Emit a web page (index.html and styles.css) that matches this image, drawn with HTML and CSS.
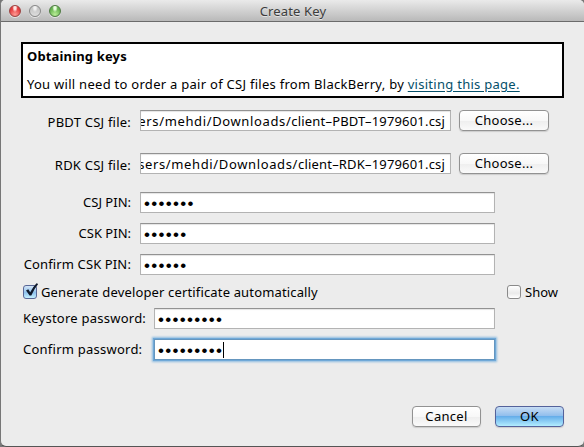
FILE: index.html
```html
<!DOCTYPE html>
<html lang="en">
<head>
<meta charset="utf-8">
<title>Create Key</title>
<link rel="stylesheet" href="styles.css">
</head>
<body>
<div class="window">
  <header class="titlebar">
    <div class="lights"><i class="light red"></i><i class="light gray"></i><i class="light green"></i></div>
    <span class="title">Create Key</span>
  </header>
  <main class="content">
    <section class="notice">
      <div class="heading">Obtaining keys</div>
      <p class="intro">You will need to order a pair of CSJ files from BlackBerry, by <a class="link">visiting this page.</a></p>
    </section>
    <div class="row file-row">
      <label class="label l-pbdt">PBDT CSJ file:</label>
      <div class="field path"><span class="folder">ers/mehdi/Downloads/</span><span class="file">client–PBDT–1979601.csj</span></div>
      <button class="button choose">Choose...</button>
    </div>
    <div class="row file-row second">
      <label class="label l-rdk">RDK CSJ file:</label>
      <div class="field path"><span class="folder">sers/mehdi/Downloads/</span><span class="file">client–RDK–1979601.csj</span></div>
      <button class="button choose">Choose...</button>
    </div>
    <div class="row">
      <label class="label">CSJ PIN:</label>
      <div class="field"><span class="dots">•••••••</span></div>
    </div>
    <div class="row">
      <label class="label">CSK PIN:</label>
      <div class="field"><span class="dots">••••••</span></div>
    </div>
    <div class="row">
      <label class="label l-confirm">Confirm CSK PIN:</label>
      <div class="field"><span class="dots">••••••</span></div>
    </div>
    <div class="checks">
      <span class="check checked"><svg class="tick" viewBox="0 0 16 16"><path d="M3 7.4L5.3 6.2L7.2 9.3Q9.8 4 13.5 .3L15.2 1Q11 6 8.3 12.5H6.6Z"/></svg></span>
      <label class="generate">Generate developer certificate automatically</label>
      <span class="check show-check"></span>
      <label class="show">Show</label>
    </div>
    <div class="row password keystore">
      <label class="label">Keystore password:</label>
      <div class="field"><span class="dots">•••••••••</span></div>
    </div>
    <div class="row password">
      <label class="label">Confirm password:</label>
      <div class="field focused"><span class="dots">•••••••••</span><span class="caret"></span></div>
    </div>
    <footer class="actions">
      <button class="button cancel">Cancel</button>
      <button class="button ok">OK</button>
    </footer>
  </main>
</div>
</body>
</html>
```
FILE: styles.css
```css
* { box-sizing: border-box; }
body {
  margin: 0;
  background: #777;
  font: 13px/20px "Noto Sans", "Open Sans", sans-serif;
  color: #000;
}
.window {
  width: 584px;
  height: 447px;
  border-left: 1px solid #777;
  border-bottom: 1px solid #555;
  border-radius: 5px 5px 6px 6px;
  background: #ececec;
  overflow: hidden;
}
.titlebar {
  display: grid;
  grid-template-columns: 60px 1fr 60px;
  align-items: center;
  height: 22px;
  border-bottom: 1px solid #6b6b6b;
  background: linear-gradient(#eaeaea, #d4d4d4 45%, #b9b9b9);
}
.lights { display: flex; gap: 8px; padding-left: 8px; }
.light {
  width: 12px;
  height: 12px;
  border: 1px solid #888;
  border-radius: 50%;
  box-shadow: 0 1px 0 #e5e5e5;
}
.red { border-color: #9b4442; background: radial-gradient(ellipse at 50% 18%, #ffe2df 0 15%, transparent 38%), radial-gradient(circle at 50% 85%, #ff9b94, #e3383b 65%); }
.gray { background: radial-gradient(ellipse at 50% 15%, #f2f2f2 0 15%, transparent 40%), linear-gradient(#bcbcbc, #dedede); }
.green { border-color: #4f7b43; background: radial-gradient(ellipse at 50% 18%, #eaffdf 0 15%, transparent 38%), radial-gradient(circle at 50% 85%, #b9ee96, #65b14f 65%); }
.title { padding-left: 1px; text-align: center; letter-spacing: .15px; color: #3c3c3c; text-shadow: 0 1px 0 #e3e3e3; }
.content { padding: 20px 20px 0; }
.notice {
  height: 56px;
  padding: 2px 4px 0;
  border: 2px solid #000;
  background: #fff;
}
.heading { font-weight: 700; letter-spacing: .15px; }
.intro { margin: 8px 0 0; white-space: nowrap; letter-spacing: .275px; }
.link { color: #05506a; text-decoration: underline; text-underline-offset: 2px; }
.row { display: flex; height: 21px; margin-top: 10px; }
.row.file-row { margin-top: 12px; }
.row.second { margin: 22px 0 18px; }
.label {
  width: 110px;
  margin-right: 9px;
  text-align: right;
  white-space: nowrap;
}
.l-pbdt, .l-rdk { padding-top: 2px; letter-spacing: .22px; }
.l-confirm { letter-spacing: .13px; }
.field {
  display: flex;
  align-items: center;
  width: 355px;
  height: 21px;
  padding-left: 3px;
  border: 1px solid #b3b3b3;
  border-top-color: #929292;
  background: #fff;
  box-shadow: inset 0 1px 1px #e4e4e4;
}
.path {
  justify-content: flex-end;
  width: 311px;
  padding: 0 5px 0 0;
  margin-right: 8px;
  overflow: hidden;
}
.folder, .file { white-space: nowrap; }
.folder { letter-spacing: .63px; }
.file { letter-spacing: .18px; }
.dots {
  padding-top: 2px;
  font: 17px/20px "Liberation Sans", sans-serif;
  letter-spacing: 1.3px;
}
.focused {
  border-color: #6596bf;
  box-shadow: 0 0 0 1px #70a9d8, 0 0 2px 2px #8bbbe0;
}
.caret { width: 1px; height: 16px; background: #000; }
.button {
  height: 21px;
  padding: 0;
  border: 1px solid #929292;
  border-radius: 4px;
  background: linear-gradient(#fff, #f8f8f8 50%, #eee 51%, #fafafa);
  box-shadow: 0 1px 1px #ccc;
  color: #000;
  font: inherit;
  line-height: 17px;
  letter-spacing: .3px;
}
.choose { width: 90px; }
.checks { display: flex; align-items: center; height: 20px; margin: 7px 0 0; white-space: nowrap; }
.check {
  position: relative;
  width: 14px;
  height: 14px;
  margin: 0 4px 0 2px;
  border: 1px solid #8a8a8a;
  border-radius: 3px;
  background: linear-gradient(#fff, #eaeaea 60%, #fff);
}
.checked { border-color: #596796; background: linear-gradient(#d4e5f7, #8fc2ed 55%, #c4f0ff); }
.tick { position: absolute; left: -1px; top: -3px; width: 16px; height: 16px; fill: #101a2c; }
.generate { letter-spacing: .15px; }
.show-check { margin-left: auto; }
.show { width: 39px; }
.row.keystore { margin-top: 6px; }
.password .label { width: 124px; margin-left: 2px; margin-right: 7px; text-align: left; letter-spacing: .24px; }
.password .field { width: 341px; }
.actions { display: flex; justify-content: flex-end; gap: 14px; margin-top: 46px; }
.cancel, .ok { width: 69px; }
.ok { border-color: #54629b; background: linear-gradient(#c7ddf4, #8fbdec 48%, #66aeea 50%, #b2edff); }
```
